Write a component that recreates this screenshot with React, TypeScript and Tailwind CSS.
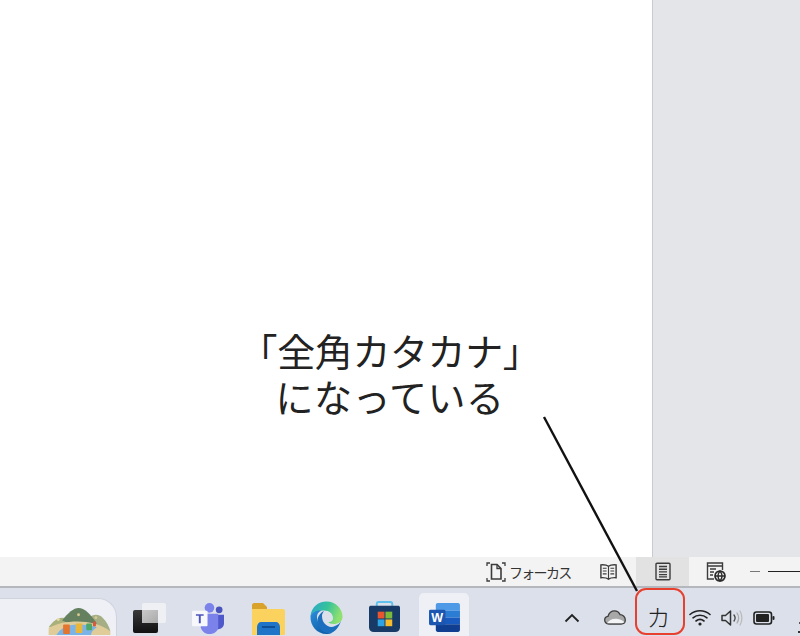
import React from "react";

function Book() {
  return (
    <svg width="19" height="18" viewBox="0 0 20 18" fill="none" stroke="#3c3c3c" strokeWidth="1.5" className="block">
      <path d="M10 3C8 1.5 5 1.3 2 1.5V15C5 14.8 8 15 10 16.5C12 15 15 14.8 18 15V1.5C15 1.3 12 1.5 10 3Z" />
      <path d="M10 3V16.5M4 5H8M4 8H8M4 11H8M12 5H16M12 8H16M12 11H16" strokeWidth="1.2" />
    </svg>
  );
}
function Page() {
  return (
    <svg width="16" height="19" viewBox="0 0 16 18" fill="none" stroke="#3c3c3c" strokeWidth="1.4" className="block">
      <rect x="1" y="0.8" width="14" height="16.4" rx="1" />
      <path d="M4 4H12M4 6.7H12M4 9.4H12M4 12.1H12M4 14.4H12" />
    </svg>
  );
}
function WebPage() {
  return (
    <svg width="20" height="20" viewBox="0 0 20 20" fill="none" stroke="#3c3c3c" strokeWidth="1.4" className="block">
      <path d="M8 17H1.5V1H16.5V8" />
      <path d="M1.5 4H16.5M4 7H10M4 10H8M4 13H7" />
      <circle cx="14" cy="14" r="5" fill="#f3f3f3" strokeWidth="1.7" stroke="#2a2a2a" />
      <path d="M9 14H19M14 9C11.5 12 11.5 16 14 19C16.5 16 16.5 12 14 9Z" stroke="#2a2a2a" />
    </svg>
  );
}
function Focus() {
  return (
    <svg width="20" height="20" viewBox="0 0 20 20" fill="none" stroke="#3c3c3c" strokeWidth="1.3" className="block shrink-0">
      <path d="M1 4V1H4M16 1H19V4M1 16V19H4M16 19H19V16" />
      <path d="M5.5 2.5H11L15 6.5V17H5.5Z" strokeWidth="1.6" />
      <path d="M11 2.5V6.5H15" />
    </svg>
  );
}
function Landscape() {
  return (
    <svg width="63" height="27" viewBox="0 0 64 28" className="block">
      <path d="M0 20C4 14 9 10 14 10C18 10 22 12 24 15L14 22Z" fill="#a9b07a" />
      <path d="M42 10C46 6 52 6 56 10C60 14 63 19 64 24L40 20Z" fill="#a5ae85" />
      <path d="M14 13C20 5 26 0 31 0C37 0 43 6 50 16L30 20Z" fill="#64805f" />
      <path d="M0 21C8 16 18 14 30 14C42 14 54 17 64 24V28H0Z" fill="#dfcc98" />
      <path d="M8 28C12 21 20 17 30 17C38 17 46 18 50 20C46 23 44 25 44 28Z" fill="#7ab3e8" />
      <rect x="15" y="17" width="7" height="10" rx="1" fill="#e4752f" />
      <rect x="28" y="16" width="7" height="10" rx="1" fill="#eab63a" />
      <rect x="39" y="16" width="6" height="7" rx="1" fill="#4fa866" />
      <rect x="46" y="14" width="3" height="5" fill="#d9573e" />
      <circle cx="10" cy="12" r="1.5" fill="#e8dca4" />
      <circle cx="31" cy="7" r="1.5" fill="#d9c890" />
      <circle cx="49" cy="10" r="1.5" fill="#d9c890" />
    </svg>
  );
}
function TaskView() {
  return (
    <div className="relative w-[33px] h-[30px]">
      <div className="absolute left-0 bottom-0 w-[25px] h-[23px] rounded-[2px] bg-gradient-to-b from-[#3a3a3a] to-[#111]" />
      <div className="absolute right-0 top-0 w-[24px] h-[20px] rounded-[2px] bg-[#eff0f3]" />
      <div className="absolute left-[9px] top-[7px] w-[16px] h-[13px] bg-gradient-to-br from-[#c9c9c9] to-[#aaaaaa]" />
    </div>
  );
}
function Teams() {
  return (
    <svg width="33" height="31" viewBox="0 0 34 32" className="block">
      <circle cx="28" cy="7" r="3.5" fill="#4b53bc" />
      <path d="M23 12H33V21C33 25 30 27 27 27H22Z" fill="#5059c9" />
      <circle cx="18" cy="5" r="5" fill="#7b83eb" />
      <path d="M10 11H27V25C27 29 23 32 18 32C13 32 10 29 9 25Z" fill="#7b83eb" />
      <rect x="0" y="8" width="16" height="16" rx="1" fill="#f7f8fb" />
      <path d="M4 11.5H12V13.2H9V21H7V13.2H4Z" fill="#4b53bc" />
    </svg>
  );
}
function Folder() {
  return (
    <svg width="33" height="32" viewBox="0 0 33 32" className="block">
      <path d="M0 2C0 1 1 0 2 0H11L15 4V12H0Z" fill="#d9a22a" />
      <path d="M0 6H31C32 6 33 7 33 8V31C33 32 32 32 31 32H0Z" fill="#fbd25e" />
      <path d="M5 32V24C5 21 7 19 9 19H24C26 19 28 21 28 24V32Z" fill="#1f74c8" />
      <path d="M10 24H23" stroke="#0d4f96" strokeWidth="2" />
    </svg>
  );
}
function Edge() {
  return (
    <svg width="33" height="33" viewBox="0 0 33 33" className="block">
      <defs>
        <linearGradient id="eg1" x1="0" y1="0" x2="1" y2="0.3">
          <stop offset="0" stopColor="#2ba6cf" />
          <stop offset="0.55" stopColor="#36c29a" />
          <stop offset="1" stopColor="#8ee070" />
        </linearGradient>
        <linearGradient id="eg2" x1="0" y1="0" x2="0.6" y2="1">
          <stop offset="0" stopColor="#2b8fdc" />
          <stop offset="1" stopColor="#0f5ea8" />
        </linearGradient>
      </defs>
      <path d="M0.5 15C1.5 6 8 0.5 16.5 0.5C26 0.5 32.5 8 32.5 15.5C32.5 21 28 23 24 23C21 23 18.5 22 18.5 21C22 21 23 19 23 17C23 13 19.5 9.5 14 9.5C7 9.5 2 12 0.5 15Z" fill="url(#eg1)" />
      <path d="M0.5 15C2 11 7 9 12 9.5C7.5 11 5 15 9 23C11 28 17 31.5 22 32C20 32.5 18 33 16.5 33C7 33 0 25 0.5 15Z" fill="url(#eg2)" />
      <path d="M12 15C12 23 19 28 25 25C28 24 30 22 31 20C29 26 25 31 20 32.5C13 32.5 8 27 7.5 20C7.5 16 10 12 14 10C12.5 12 12 13.5 12 15Z" fill="#1b6fbe" />
    </svg>
  );
}
function Store() {
  return (
    <svg width="31" height="32" viewBox="0 0 32 33" className="block">
      <path d="M8 6V3C8 1.5 9 1 10 1H22C23 1 24 1.5 24 3V6" fill="none" stroke="#5fc0ee" strokeWidth="2" />
      <path d="M0 7C0 5.5 1 5 2 5H30C31 5 32 5.5 32 7V27C32 30 30 32 27 32H5C2 32 0 30 0 27Z" fill="#173a66" />
      <rect x="9" y="11" width="7" height="7" fill="#e8562f" />
      <rect x="17" y="11" width="7" height="7" fill="#7cbb3a" />
      <rect x="9" y="19" width="7" height="7" fill="#2ea4e6" />
      <rect x="17" y="19" width="7" height="7" fill="#f8bb2c" />
    </svg>
  );
}
function Word() {
  return (
    <svg width="31" height="29" viewBox="0 0 32 30" className="block">
      <path d="M7 2C7 1 8 0 9 0H30C31 0 32 1 32 2V8H7Z" fill="#4f9ae6" />
      <rect x="7" y="8" width="25" height="7" fill="#2b7cd3" />
      <rect x="7" y="15" width="25" height="7" fill="#185abd" />
      <path d="M7 22H32V28C32 29 31 30 30 30H9C8 30 7 29 7 28Z" fill="#103f91" />
      <rect x="0" y="7" width="17" height="16" rx="1.5" fill="#1d56b0" />
      <text x="8.5" y="20" textAnchor="middle" fontSize="13" fontWeight="700" fill="#fff" fontFamily="'Liberation Sans', sans-serif">W</text>
    </svg>
  );
}
function Cloud() {
  return (
    <svg width="22" height="15" viewBox="0 0 22 15" className="block">
      <path d="M5 14C2 14 0.7 12 0.7 10C0.7 8 2 6.5 4 6.3C5 3 7.5 0.8 10.5 0.8C13 0.8 15 2.3 16 4.6C19 4.6 21.3 7 21.3 10C21.3 12.5 19.5 14 17 14Z" fill="#a8a8a8" stroke="#3c3c3c" strokeWidth="1.3" />
      <path d="M3 13.3C5 10 9 8 14 9C17 9.5 19 11 20.5 12.3L18 13.3H5Z" fill="#f3f4f6" />
    </svg>
  );
}
function Wifi() {
  return (
    <svg width="22" height="17" viewBox="0 0 22 17" fill="none" stroke="#222" strokeWidth="1.6" strokeLinecap="round" className="block">
      <path d="M1 5.5C6.5 0.5 15.5 0.5 21 5.5" />
      <path d="M4 8.8C8 5.3 14 5.3 18 8.8" />
      <path d="M7 12C9.3 10.2 12.7 10.2 15 12" />
      <circle cx="11" cy="15" r="1.6" fill="#222" stroke="none" />
    </svg>
  );
}
function Speaker() {
  return (
    <svg width="22" height="18" viewBox="0 0 22 18" fill="none" strokeLinecap="round" className="block">
      <path d="M1 6.5H4.5L9.5 2V16L4.5 11.5H1Z" stroke="#333" strokeWidth="1.5" strokeLinejoin="round" />
      <path d="M13 6C14.5 8 14.5 10 13 12" stroke="#444" strokeWidth="1.3" />
      <path d="M16 4C18 7 18 11 16 14" stroke="#aaa" strokeWidth="1.3" />
      <path d="M19 2C21.5 6 21.5 12 19 16" stroke="#bbb" strokeWidth="1.3" />
    </svg>
  );
}
function Battery() {
  return (
    <svg width="22" height="14" viewBox="0 0 22 14" className="block">
      <rect x="1" y="1" width="17.5" height="12" rx="2.5" fill="none" stroke="#222" strokeWidth="1.6" />
      <rect x="3" y="3" width="13" height="8" rx="1" fill="#222" />
      <rect x="19.5" y="5" width="2" height="4" rx="1" fill="#222" />
    </svg>
  );
}

export default function App() {
  return (
    <div className="relative w-[800px] h-[636px] overflow-hidden flex flex-col bg-white font-['Noto_Sans_CJK_JP',sans-serif]">
      {/* document area */}
      <div className="flex h-[557px] shrink-0">
        <div className="relative w-[652px] bg-white">
          <div className="absolute left-0 top-[327px] w-[780px] text-center text-[38px] leading-[46px] tracking-[-0.4px] font-normal text-[#222]">
            <div>「全角カタカナ」</div>
            <div className="tracking-[0.5px]">になっている</div>
          </div>
        </div>
        <div className="flex-1 bg-[#e4e5e9] border-l border-[#c9cacd]" />
      </div>

      {/* status bar */}
      <div className="flex items-center h-[29px] bg-[#f3f3f3] shrink-0">
        <div className="ml-[486px] w-[83px] shrink-0 flex items-center gap-[3px]">
          <Focus />
          <span className="text-[14px] tracking-[-1.7px] leading-none text-[#333] whitespace-nowrap">フォーカス</span>
        </div>
        <div className="ml-[30px] shrink-0"><Book /></div>
        <div className="ml-[18px] w-[53px] h-[29px] shrink-0 bg-[#e2e2e2] flex items-center justify-center"><Page /></div>
        <div className="ml-[17px] shrink-0"><WebPage /></div>
        <div className="ml-[24px] flex items-center gap-[8px] shrink-0">
          <div className="w-[10px] h-px bg-[#777]" />
          <div className="w-[40px] h-[1.5px] bg-[#222]" />
        </div>
      </div>

      {/* taskbar */}
      <div className="relative flex-1 flex items-end bg-[#dce0ea] border-t-2 border-[#b4b7bb]">
        <div className="relative w-[117px] h-[38px] bg-[#eef0f5] rounded-tr-[19px] border-t border-r border-[#cfd3dc] shrink-0">
          <div className="absolute left-[48px] top-[9px]"><Landscape /></div>
        </div>
        <div className="ml-[16px] mb-[3px] shrink-0"><TaskView /></div>
        <div className="ml-[26px] mb-[2px] shrink-0"><Teams /></div>
        <div className="ml-[27px] mb-[1px] shrink-0"><Folder /></div>
        <div className="ml-[25px] mb-[2px] shrink-0"><Edge /></div>
        <div className="ml-[26px] mb-[3px] shrink-0"><Store /></div>
        <div className="ml-[19px] w-[50px] h-[43px] shrink-0 rounded-t-[5px] bg-[#eef0f6] flex items-end justify-center pb-[4px]"><Word /></div>

        <div className="ml-[95px] mb-[13px] shrink-0">
          <svg width="16" height="10" viewBox="0 0 16 10" fill="none" stroke="#222" strokeWidth="1.8" className="block">
            <path d="M1.5 8.5L8 2L14.5 8.5" />
          </svg>
        </div>
        <div className="ml-[24px] mb-[11px] shrink-0"><Cloud /></div>
        <div className="ml-[9px] w-[50px] h-[47px] mb-[1px] shrink-0 rounded-[11px] border-2 border-[#e8402f] flex items-center justify-center pt-[10px] pr-[3px] text-[24px] font-light leading-none text-[#222]">カ</div>
        <div className="ml-[4px] mb-[10px] shrink-0"><Wifi /></div>
        <div className="ml-[10px] mb-[9px] shrink-0"><Speaker /></div>
        <div className="ml-[10px] mb-[11px] shrink-0"><Battery /></div>
        <div className="absolute right-0 bottom-[3px] w-[2px] h-[2px] bg-[#333]" />
        <div className="absolute right-0 bottom-[12px] w-[1px] h-[2px] bg-[#555]" />
      </div>

      {/* annotation line */}
      <svg className="absolute left-0 top-0 pointer-events-none" width="800" height="636" viewBox="0 0 800 636">
        <line x1="544" y1="417" x2="637" y2="591" stroke="#111" strokeWidth="2.4" />
      </svg>
    </div>
  );
}
